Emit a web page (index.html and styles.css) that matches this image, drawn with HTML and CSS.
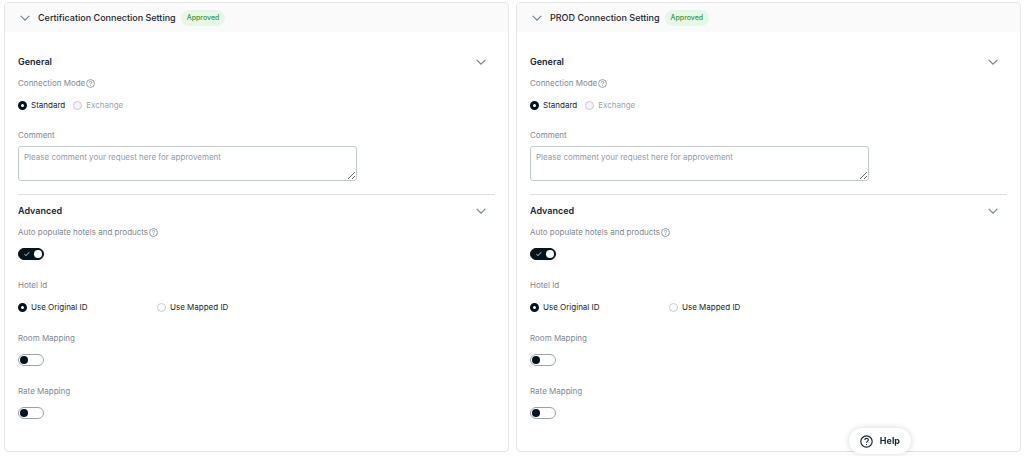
FILE: index.html
```html
<!DOCTYPE html>
<html lang="en">
<head>
<meta charset="utf-8">
<meta name="viewport" content="width=device-width, initial-scale=1">
<title>Connection Settings</title>
<link rel="stylesheet" href="styles.css">
</head>
<body>
<svg class="sprite" aria-hidden="true">
  <symbol id="chevron" viewBox="0 0 10 6"><path d="M.7.8 5 5.1 9.3.8" fill="none" stroke="currentColor" stroke-width="1.2"/></symbol>
  <symbol id="question" viewBox="0 0 16 16"><circle cx="8" cy="8" r="7" fill="none" stroke="currentColor" stroke-width="1.4"/><path d="M5.9 6.3C5.9 3.4 10.2 3.5 10.2 6.2 10.2 7.8 8 7.8 8 9.6M8 11v1.4" fill="none" stroke="currentColor" stroke-width="1.4"/></symbol>
  <symbol id="tick" viewBox="0 0 8 6"><path d="m1.4 3.2 1.5 1.4L6.4 1.2" fill="none" stroke="currentColor" stroke-width=".8"/></symbol>
</svg>
<main class="panels">
  <section class="card">
    <header class="card-header">
      <button class="collapse" type="button" aria-label="Collapse certification settings"><svg class="chevron"><use href="#chevron"/></svg></button>
      <h2 class="card-title">Certification Connection Setting</h2>
      <span class="badge">Approved</span>
    </header>
    <div class="card-body">
      <section class="group">
        <div class="group-header">
          <h3 class="group-title">General</h3>
          <button class="collapse" type="button" aria-label="Collapse general"><svg class="chevron"><use href="#chevron"/></svg></button>
        </div>
        <div class="field" role="radiogroup" aria-labelledby="cert-mode">
          <span class="label" id="cert-mode">Connection Mode <svg class="hint"><use href="#question"/></svg></span>
          <div class="options">
            <label class="option"><input class="radio" type="radio" name="cert-mode" checked>Standard</label>
            <label class="option option-disabled"><input class="radio" type="radio" name="cert-mode" disabled>Exchange</label>
          </div>
        </div>
        <div class="field field-text">
          <label class="label" for="cert-comment">Comment</label>
          <textarea class="comment" id="cert-comment" placeholder="Please comment your request here for approvement"></textarea>
        </div>
      </section>
      <section class="group">
        <div class="group-header">
          <h3 class="group-title">Advanced</h3>
          <button class="collapse" type="button" aria-label="Collapse advanced"><svg class="chevron"><use href="#chevron"/></svg></button>
        </div>
        <div class="field">
          <label class="label" for="cert-auto">Auto populate hotels and products <svg class="hint"><use href="#question"/></svg></label>
          <span class="switch"><input class="toggle" type="checkbox" role="switch" id="cert-auto" checked><svg class="tick"><use href="#tick"/></svg></span>
        </div>
        <div class="field" role="radiogroup" aria-labelledby="cert-hotel">
          <span class="label" id="cert-hotel">Hotel Id</span>
          <div class="options options-wide">
            <label class="option"><input class="radio" type="radio" name="cert-hotel" checked>Use Original ID</label>
            <label class="option"><input class="radio" type="radio" name="cert-hotel">Use Mapped ID</label>
          </div>
        </div>
        <div class="field">
          <label class="label" for="cert-room">Room Mapping</label>
          <span class="switch"><input class="toggle" type="checkbox" role="switch" id="cert-room"></span>
        </div>
        <div class="field">
          <label class="label" for="cert-rate">Rate Mapping</label>
          <span class="switch"><input class="toggle" type="checkbox" role="switch" id="cert-rate"></span>
        </div>
      </section>
    </div>
  </section>
  <section class="card">
    <header class="card-header">
      <button class="collapse" type="button" aria-label="Collapse production settings"><svg class="chevron"><use href="#chevron"/></svg></button>
      <h2 class="card-title">PROD Connection Setting</h2>
      <span class="badge">Approved</span>
    </header>
    <div class="card-body">
      <section class="group">
        <div class="group-header">
          <h3 class="group-title">General</h3>
          <button class="collapse" type="button" aria-label="Collapse general"><svg class="chevron"><use href="#chevron"/></svg></button>
        </div>
        <div class="field" role="radiogroup" aria-labelledby="prod-mode">
          <span class="label" id="prod-mode">Connection Mode <svg class="hint"><use href="#question"/></svg></span>
          <div class="options">
            <label class="option"><input class="radio" type="radio" name="prod-mode" checked>Standard</label>
            <label class="option option-disabled"><input class="radio" type="radio" name="prod-mode" disabled>Exchange</label>
          </div>
        </div>
        <div class="field field-text">
          <label class="label" for="prod-comment">Comment</label>
          <textarea class="comment" id="prod-comment" placeholder="Please comment your request here for approvement"></textarea>
        </div>
      </section>
      <section class="group">
        <div class="group-header">
          <h3 class="group-title">Advanced</h3>
          <button class="collapse" type="button" aria-label="Collapse advanced"><svg class="chevron"><use href="#chevron"/></svg></button>
        </div>
        <div class="field">
          <label class="label" for="prod-auto">Auto populate hotels and products <svg class="hint"><use href="#question"/></svg></label>
          <span class="switch"><input class="toggle" type="checkbox" role="switch" id="prod-auto" checked><svg class="tick"><use href="#tick"/></svg></span>
        </div>
        <div class="field" role="radiogroup" aria-labelledby="prod-hotel">
          <span class="label" id="prod-hotel">Hotel Id</span>
          <div class="options options-wide">
            <label class="option"><input class="radio" type="radio" name="prod-hotel" checked>Use Original ID</label>
            <label class="option"><input class="radio" type="radio" name="prod-hotel">Use Mapped ID</label>
          </div>
        </div>
        <div class="field">
          <label class="label" for="prod-room">Room Mapping</label>
          <span class="switch"><input class="toggle" type="checkbox" role="switch" id="prod-room"></span>
        </div>
        <div class="field">
          <label class="label" for="prod-rate">Rate Mapping</label>
          <span class="switch"><input class="toggle" type="checkbox" role="switch" id="prod-rate"></span>
        </div>
      </section>
    </div>
  </section>
</main>
<button class="help" type="button"><svg class="help-icon"><use href="#question"/></svg>Help</button>
</body>
</html>
```

FILE: styles.css
```css
* { box-sizing: border-box; }
body {
  margin: 0;
  background: #fff;
  color: #17262e;
  font: 8px/12px Inter, "Liberation Sans", sans-serif;
}
h2, h3 { margin: 0; font-size: 9px; font-weight: 600; }
.card-title { font-weight: 500; }
button { font: inherit; color: inherit; cursor: pointer; }
.sprite { position: absolute; width: 0; height: 0; }

.panels {
  display: grid;
  grid-template-columns: 1fr 1fr;
  gap: 7px;
  padding: 2px 3px 5px 4px;
}
.card {
  border: 1px solid #e3e5e6;
  border-radius: 4px;
  overflow: hidden;
}
.card-header {
  display: flex;
  align-items: center;
  height: 29px;
  padding: 0 15px;
  background: #fafafa;
}
.card-header .collapse { margin-right: 8px; }
.badge {
  margin-left: 5px;
  padding: 2px 6px;
  border-radius: 8px;
  background: #e6f7e6;
  color: #3a9445;
  font-size: 7px;
  font-weight: 500;
}
.collapse {
  display: flex;
  padding: 0;
  border: 0;
  background: none;
  color: #75838c;
}
.chevron { width: 10px; height: 6px; }

.card-body { padding: 22px 13px 32px; }
.group + .group {
  margin-top: 13px;
  padding-top: 8px;
  border-top: 1px solid #dde0e2;
}
.group-header {
  display: flex;
  align-items: center;
  justify-content: space-between;
  height: 16px;
  margin-bottom: 7px;
  padding-right: 9px;
}

.field {
  display: flex;
  flex-direction: column;
  align-items: flex-start;
  gap: 10px;
}
.field + .field { margin-top: 18px; }
.group + .group .field + .field { margin-top: 19px; }
.group .field-text { gap: 5px; }
.label {
  display: flex;
  align-items: center;
  gap: 1px;
  color: #7e898f;
}
.hint { width: 9px; height: 9px; }
.options { display: flex; gap: 8px; }
.options-wide {
  display: grid;
  grid-template-columns: 131px auto;
}
.option { display: flex; align-items: center; gap: 4px; }
.option-disabled { color: #9da4a8; }
.radio {
  appearance: none;
  width: 9px;
  height: 9px;
  margin: 0;
  border: 1px solid #c4cacd;
  border-radius: 50%;
  background: #fff;
}
.radio:checked { border: 3px solid #03141c; }
.radio:disabled { background: #f5f5f5; }

.comment {
  width: 71%;
  height: 35px;
  padding: 4px 5px;
  border: 1px solid #c3cacd;
  border-radius: 3px;
  font: inherit;
  resize: vertical;
}
.comment::placeholder { color: #929b9f; }

.switch { position: relative; display: flex; }
.toggle {
  appearance: none;
  display: flex;
  align-items: center;
  width: 26px;
  height: 12px;
  margin: 0;
  padding: 0 1px;
  border: 1px solid #98a2a7;
  border-radius: 6px;
  background: #fff;
}
.toggle::before {
  content: "";
  width: 8px;
  height: 8px;
  border-radius: 50%;
  background: #03141c;
}
.toggle:checked {
  justify-content: flex-end;
  border-color: #03141c;
  background: #03141c;
}
.toggle:checked::before { background: #fff; }
.tick {
  position: absolute;
  top: 3px;
  left: 5px;
  width: 8px;
  height: 6px;
  color: #fff;
  pointer-events: none;
}

.help {
  position: fixed;
  right: 113px;
  bottom: 2px;
  display: flex;
  align-items: center;
  gap: 7px;
  height: 26px;
  padding: 0 11px;
  border: 0;
  border-radius: 13px;
  background: #fff;
  box-shadow: 0 0 6px #0000002b;
  font-size: 9px;
  font-weight: 700;
}
.help-icon { width: 13px; height: 13px; }
```
